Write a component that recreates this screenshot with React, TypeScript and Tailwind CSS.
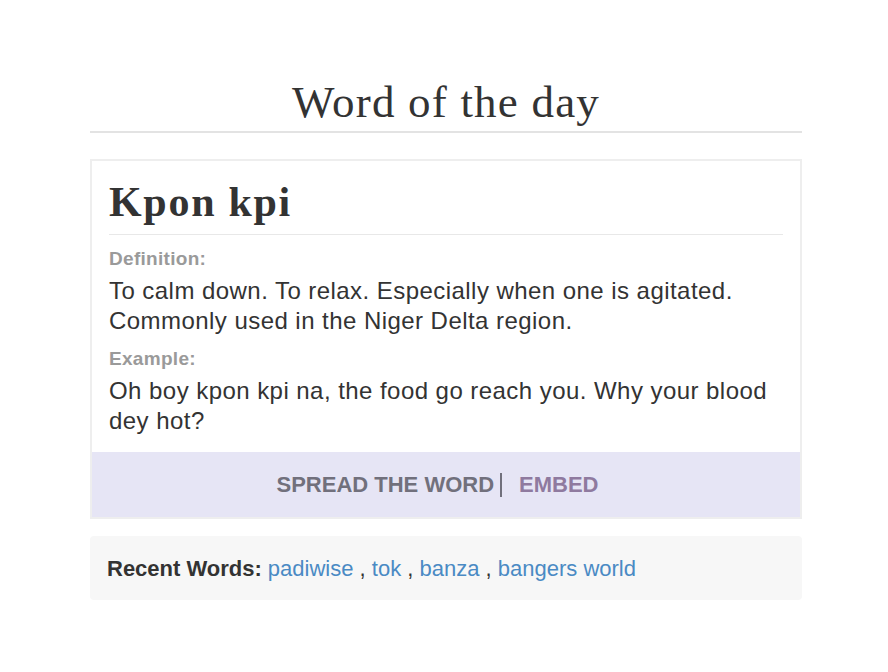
export default function App() {
  const recent = ['padiwise', 'tok', 'banza', 'bangers world'];
  return (
    <div className="min-h-screen bg-white pt-[74px]">
      <div className="ml-[90px] w-[712px]">
        <h1 className="text-center text-[45px] leading-[56px] tracking-[1.2px] text-[#333] font-['Liberation_Serif',serif] pb-[1px] border-b-2 border-[#e3e3e3]">
          Word of the day
        </h1>
        <div className="mt-[26px] border-2 border-[#eeeeee] bg-white">
          <div className="px-[17px] pt-[16px] pb-[16px] font-['Liberation_Sans',Arial,sans-serif]">
            <h2 className="text-[42px] leading-[50px] tracking-[1.7px] font-bold text-[#333] font-['Liberation_Serif',serif] pb-[7px] border-b border-[#e8e8e8]">
              Kpon kpi
            </h2>
            <div className="mt-[13px] text-[19px] leading-[22px] tracking-[0.3px] font-bold text-[#9a9a9a]">Definition:</div>
            <p className="mt-[6px] text-[24px] leading-[30px] tracking-[0.45px] text-[#333]">
              To calm down. To relax. Especially when one is agitated. Commonly used in the Niger Delta region.
            </p>
            <div className="mt-[12px] text-[19px] leading-[22px] tracking-[0.3px] font-bold text-[#9a9a9a]">Example:</div>
            <p className="mt-[6px] text-[24px] leading-[30px] tracking-[0.45px] text-[#333]">
              Oh boy kpon kpi na, the food go reach you. Why your blood dey hot?
            </p>
          </div>
          <div className="h-[65px] pr-[17px] bg-[#e6e5f5] flex items-center justify-center font-['Liberation_Sans',Arial,sans-serif] text-[22px] font-bold">
            <span className="text-[#71707c]">SPREAD THE WORD</span>
            <span className="ml-[6px] inline-block w-[2px] h-[24px] bg-[#71707c]"></span>
            <span className="ml-[17px] text-[#8f7a9f]">EMBED</span>
          </div>
        </div>
        <div className="mt-[17px] h-[64px] rounded-[4px] bg-[#f7f7f7] px-[17px] flex items-center font-['Liberation_Sans',Arial,sans-serif] text-[22px]">
          <span className="font-bold text-[#333]">Recent Words:</span>
          <span className="ml-[6px]">
            {recent.map((w, i) => (
              <span key={w}>
                <a href="#" className="text-[#4a8ac4]">{w}</a>
                {i < recent.length - 1 && <span className="text-[#333]"> , </span>}
              </span>
            ))}
          </span>
        </div>
      </div>
    </div>
  );
}
